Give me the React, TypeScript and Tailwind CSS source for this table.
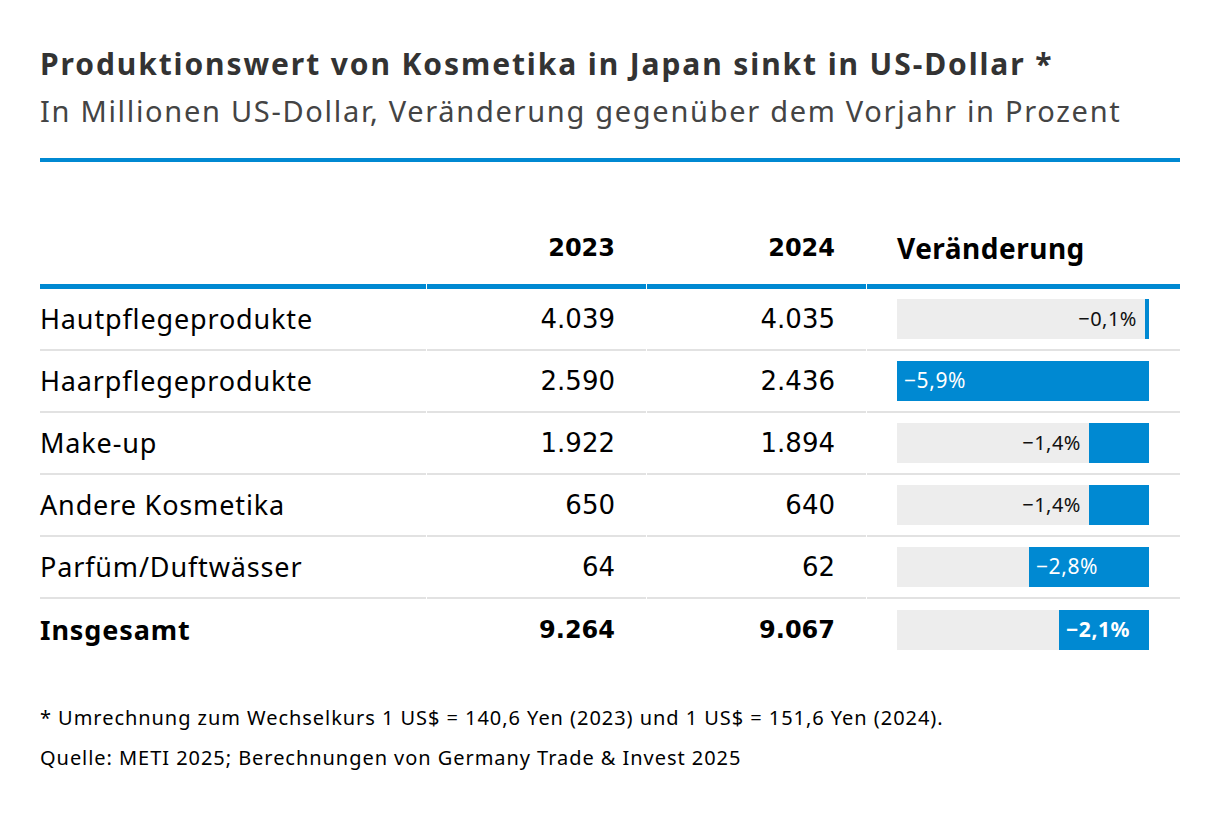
import React from "react";

const rows = [
  { name: "Hautpflegeprodukte", a: "4.039", b: "4.035", pct: 0.1, label: "−0,1%" },
  { name: "Haarpflegeprodukte", a: "2.590", b: "2.436", pct: 5.9, label: "−5,9%" },
  { name: "Make-up", a: "1.922", b: "1.894", pct: 1.4, label: "−1,4%" },
  { name: "Andere Kosmetika", a: "650", b: "640", pct: 1.4, label: "−1,4%" },
  { name: "Parfüm/Duftwässer", a: "64", b: "62", pct: 2.8, label: "−2,8%" },
];

const BAR_W = 252;
const MAX = 5.9;

function Bar({ pct, label, bold }: { pct: number; label: string; bold?: boolean }) {
  const w = Math.max(3, Math.round((pct / MAX) * BAR_W));
  const inside = w >= 80;
  return (
    <div className="flex h-[40px] w-[252px] justify-end bg-[#ededed]">
      {!inside && (
        <div className="flex items-center pr-[8px] text-[20px] tracking-[0.5px] text-[#111]">{label}</div>
      )}
      <div className="flex h-full items-center bg-[#0089d2]" style={{ width: w, paddingLeft: inside ? 7 : 0 }}>
        {inside && (
          <span className={`text-[21px] tracking-[0.6px] text-white ${bold ? "font-bold" : ""}`}>{label}</span>
        )}
      </div>
    </div>
  );
}

export default function App() {
  const sans = "font-['Noto_Sans',sans-serif]";
  const num = "font-['DejaVu_Sans',sans-serif]";
  return (
    <div className={`h-[814px] w-[1220px] bg-white px-[40px] pt-[42px] ${sans}`}>
      <h1 className="text-[30px] font-bold leading-[44px] tracking-[1.9px] text-[#333]">
        Produktionswert von Kosmetika in Japan sinkt in US-Dollar *
      </h1>
      <p className="mt-[5px] text-[29px] leading-[40px] tracking-[1.7px] text-[#444]">
        In Millionen US-Dollar, Veränderung gegenüber dem Vorjahr in Prozent
      </p>
      <div className="mt-[27px] h-[4px] w-full bg-[#0089d2]" />

      <div className="mt-[67px] grid grid-cols-[386px_219px_219px_313px] gap-x-px">
        <div className="border-b-[5px] border-[#0089d2]" />
        <div className={`border-b-[5px] border-[#0089d2] pb-[17px] pr-[31px] text-right text-[24px] font-bold leading-[38px] text-black ${num}`}>2023</div>
        <div className={`border-b-[5px] border-[#0089d2] pb-[17px] pr-[31px] text-right text-[24px] font-bold leading-[38px] text-black ${num}`}>2024</div>
        <div className="border-b-[5px] border-[#0089d2] pb-[17px] pl-[30px] text-[28px] font-bold leading-[38px] tracking-[0.5px] text-black">Veränderung</div>

        {rows.map((r) => (
          <React.Fragment key={r.name}>
            <div className="flex h-[62px] items-center border-b-2 border-[#e2e2e2] text-[27px] tracking-[0.85px] text-black">{r.name}</div>
            <div className={`flex h-[62px] items-center justify-end border-b-2 border-[#e2e2e2] pr-[31px] text-[26px] text-black ${num}`}>{r.a}</div>
            <div className={`flex h-[62px] items-center justify-end border-b-2 border-[#e2e2e2] pr-[31px] text-[26px] text-black ${num}`}>{r.b}</div>
            <div className="flex h-[62px] items-center border-b-2 border-[#e2e2e2] pl-[30px]">
              <Bar pct={r.pct} label={r.label} />
            </div>
          </React.Fragment>
        ))}
        <div className="flex h-[62px] items-center text-[27px] font-bold tracking-[0.9px] text-black">Insgesamt</div>
        <div className={`flex h-[62px] items-center justify-end pr-[31px] text-[24px] font-bold text-black ${num}`}>9.264</div>
        <div className={`flex h-[62px] items-center justify-end pr-[31px] text-[24px] font-bold text-black ${num}`}>9.067</div>
        <div className="flex h-[62px] items-center pl-[30px]">
          <Bar pct={2.1} label="−2,1%" bold />
        </div>
      </div>

      <div className="mt-[37px] text-[20px] leading-[40px] tracking-[0.95px] text-black">
        <p>* Umrechnung zum Wechselkurs 1 US$ = 140,6 Yen (2023) und 1 US$ = 151,6 Yen (2024).</p>
        <p>Quelle: METI 2025; Berechnungen von Germany Trade &amp; Invest 2025</p>
      </div>
    </div>
  );
}
